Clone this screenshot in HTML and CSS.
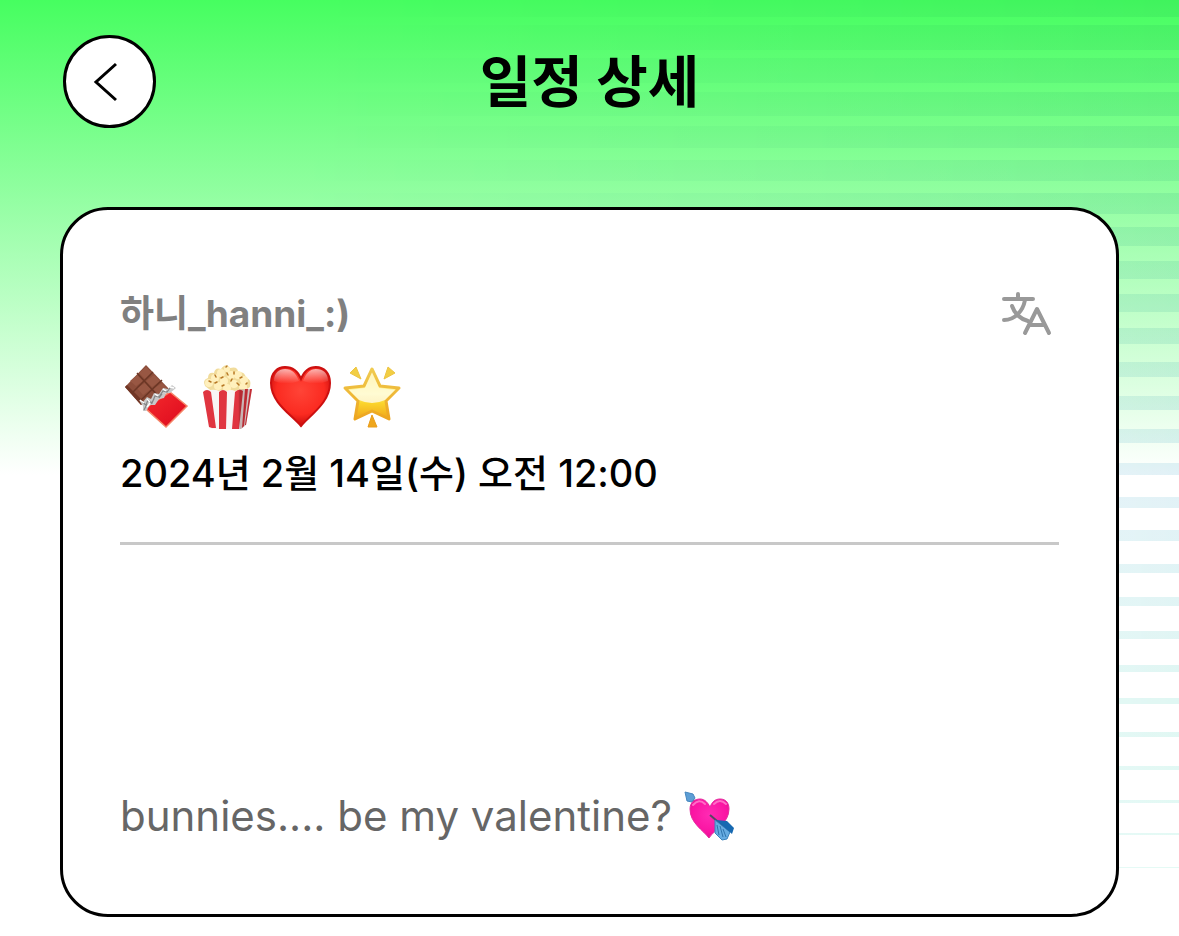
FILE: index.html
```html
<!DOCTYPE html>
<html lang="ko">
<head>
    <meta charset="UTF-8">
    <meta name="viewport" content="width=device-width, initial-scale=1.0">
    <title>일정 상세</title>
    <link rel="stylesheet" href="styles.css">
</head>
<body>
    <!-- 배경 줄무늬 -->
    <svg class="stripes" viewBox="0 0 1179 936" preserveAspectRatio="none" aria-hidden="true">
        <defs>
            <linearGradient id="fade-x">
                <stop offset="0.25" stop-color="#000"/>
                <stop offset="0.65" stop-color="#777"/>
                <stop offset="1" stop-color="#fff"/>
            </linearGradient>
            <linearGradient id="tint" x1="0" y1="0" x2="0" y2="1">
                <stop offset="0" stop-color="#e8f4f8"/>
                <stop offset="0.5" stop-color="#e2f1f7"/>
                <stop offset="0.75" stop-color="#e0f7f3"/>
                <stop offset="1" stop-color="#e6fbf6"/>
            </linearGradient>
            <mask id="bars" maskUnits="userSpaceOnUse" x="0" y="0" width="1179" height="936">
                <path fill="url(#fade-x)" d="M0 0H1179V17H0ZM0 25H1179V50H0ZM0 58H1179V83H0ZM0 92H1179V116H0ZM0 126H1179V148H0ZM0 160H1179V181H0ZM0 193H1179V214H0ZM0 227H1179V246H0ZM0 261H1179V279H0ZM0 294H1179V312H0ZM0 328H1179V344H0ZM0 362H1179V377H0ZM0 396H1179V410H0ZM0 429H1179V443H0ZM0 463H1179V475H0ZM0 497H1179V508H0ZM0 530H1179V541H0ZM0 564H1179V573H0ZM0 597H1179V606H0ZM0 631H1179V639H0ZM0 665H1179V672H0ZM0 698H1179V704H0ZM0 732H1179V737H0ZM0 766H1179V770H0ZM0 800H1179V803H0ZM0 833H1179V835H0ZM0 867H1179V868H0Z"/>
            </mask>
        </defs>
        <rect width="1179" height="936" fill="url(#tint)" mask="url(#bars)"/>
    </svg>

    <header class="header">
        <button class="back-btn" type="button" aria-label="뒤로">
            <svg class="back-icon" viewBox="0 0 48 48" aria-hidden="true">
                <path d="M30 6L10 24L30 42"/>
            </svg>
        </button>
        <h1 class="title">일정 상세</h1>
    </header>

    <main class="card">
        <div class="name-row">
            <h2 class="name">하니_hanni_:)</h2>
            <button class="translate-btn" type="button" aria-label="번역">
                <svg class="translate-icon" viewBox="0 0 54 48" aria-hidden="true">
                    <path d="M4 9H33M18 4V9M25 10C23 21 15 30 4 30M12 16C15 25 21 29 28 31"/>
                    <path d="M25 43L37 19L49 43M29 35H45"/>
                </svg>
            </button>
        </div>

        <div class="emojis">
            <!-- 초콜릿 -->
            <svg class="emoji" viewBox="0 0 72 72" role="img" aria-label="초콜릿">
                <defs>
                    <linearGradient id="wrap" x1="0" y1="0" x2="1" y2="1">
                        <stop offset="0" stop-color="#f52b2d"/>
                        <stop offset="0.7" stop-color="#e41322"/>
                        <stop offset="1" stop-color="#c90d19"/>
                    </linearGradient>
                </defs>
                <path fill="#8c4d3a" d="M26 4L50 29L21 44L5 26Z"/>
                <path fill="#713625" d="M5 26L21 44L23 40L7 24Z"/>
                <path fill="#985743" d="M26 6L32 12L25 18L19 12ZM34 14L40 20L32 26L26 20ZM17 14L23 20L16 25L10 20ZM25 22L31 28L23 34L17 27ZM42 22L47 27L38 33L33 28Z"/>
                <path stroke="#6b3625" stroke-width="1.5" fill="none" d="M17 12L39 36M33 11L12 32M42 19L20 40"/>
                <path fill="url(#wrap)" stroke="#f58467" stroke-width="1.5" d="M50 31L67 45L46 66L25 47Z"/>
                <path fill="#c9c9c9" d="M19 39L23 41L27 36L31 38L34 32L39 33L43 27L48 28L52 24L56 27L50 32L46 32L44 37L39 38L35 44L30 44L26 50L23 50L23 45Z"/>
                <path stroke="#858585" stroke-width="1.2" fill="none" d="M22 41L26 44L28 39L32 42L35 35L39 36L43 30L47 31L50 27M24 49L27 43M31 43L34 38M39 37L42 33"/>
                <path stroke="#fff" stroke-width="1.3" fill="none" d="M20 39L24 42M27 38L30 41M35 33L38 35M43 28L46 30M50 26L54 27M27 46L30 42"/>
            </svg>
            <!-- 팝콘 -->
            <svg class="emoji" viewBox="0 0 72 72" role="img" aria-label="팝콘">
                <defs>
                    <linearGradient id="box-side">
                        <stop offset="0" stop-color="#000" stop-opacity="0"/>
                        <stop offset="0.72" stop-color="#000" stop-opacity="0"/>
                        <stop offset="0.76" stop-color="#501010" stop-opacity="0.3"/>
                        <stop offset="1" stop-color="#501010" stop-opacity="0.2"/>
                    </linearGradient>
                </defs>
                <path fill="#f1dc9c" d="M13 25Q10 19 16 17Q16 11 22 12Q23 6 29 8Q34 1 38 7Q46 5 46 11Q53 10 54 17Q60 18 58 26L50 32H22Z"/>
                <g fill="#fff0bd">
                    <circle cx="17" cy="22" r="4"/><circle cx="23" cy="17" r="4"/><circle cx="29" cy="12" r="4"/>
                    <circle cx="35" cy="8" r="3"/><circle cx="39" cy="14" r="4"/><circle cx="46" cy="14" r="4"/>
                    <circle cx="52" cy="19" r="4"/><circle cx="32" cy="20" r="4"/><circle cx="42" cy="23" r="4"/>
                    <circle cx="26" cy="25" r="4"/><circle cx="51" cy="26" r="4"/><circle cx="35" cy="27" r="4"/>
                </g>
                <path stroke="#b87825" stroke-width="1.5" stroke-linecap="round" fill="none" d="M17 20L19 21M23 14L24 16M29 17L31 16M35 12L36 14M42 11L42 13M48 17L50 16M39 20L40 18M45 22L47 24M23 22L25 21M30 25L32 24M54 23L55 22M34 6L35 5"/>
                <path fill="#f8f5f5" d="M11 31L13 29Q15 28 18 29Q23 28 27 30Q31 28 35 30Q39 28 43 30Q47 28 51 29Q55 27 60 28L54 64L49 68H20L17 66Z"/>
                <path fill="#e03540" d="M11 31Q15 27 19 31L24 67H20L17 66ZM27 31Q31 27 35 31L34 68H27ZM43 31Q47 27 51 30L47 68H40ZM53 28L56 28L52 65L50 67ZM58 28L60 28L54 64L53 64Z"/>
                <path fill="url(#box-side)" d="M11 31L13 29L60 28L54 64L49 68H20L17 66Z"/>
            </svg>
            <!-- 하트 -->
            <svg class="emoji" viewBox="0 0 72 72" role="img" aria-label="빨간 하트">
                <defs>
                    <radialGradient id="heart-red" cx="0.5" cy="0.4" r="0.62">
                        <stop offset="0" stop-color="#ff4437"/>
                        <stop offset="0.65" stop-color="#fb2b21"/>
                        <stop offset="1" stop-color="#c40909"/>
                    </radialGradient>
                    <linearGradient id="gloss" x1="0" y1="0" x2="0" y2="1">
                        <stop offset="0" stop-color="#fff" stop-opacity="0.65"/>
                        <stop offset="1" stop-color="#fff" stop-opacity="0"/>
                    </linearGradient>
                </defs>
                <path fill="url(#heart-red)" stroke="#cc1010" stroke-width="2" d="M37 65C28 54 7 42 7 22C7 11 14 6 21 6C29 6 34 10 37 18C40 10 45 6 52 6C60 6 66 12 66 22C66 42 46 54 37 65Z"/>
                <path fill="url(#gloss)" d="M10 20C10 12 15 8 21 8C28 8 32 12 35 20Q22 25 10 20ZM39 20C42 12 46 8 52 8C59 8 64 12 64 20Q52 25 39 20Z"/>
            </svg>
            <!-- 별 -->
            <svg class="emoji" viewBox="0 0 72 72" role="img" aria-label="빛나는 별">
                <defs>
                    <linearGradient id="star-gold" x1="0" y1="0" x2="0" y2="1">
                        <stop offset="0" stop-color="#fff0a0"/>
                        <stop offset="0.5" stop-color="#fff58c"/>
                        <stop offset="0.68" stop-color="#fbd52c"/>
                        <stop offset="1" stop-color="#f0a51b"/>
                    </linearGradient>
                    <linearGradient id="star-edge" x1="0" y1="0" x2="0" y2="1">
                        <stop offset="0" stop-color="#f0cb50"/>
                        <stop offset="1" stop-color="#eda51f"/>
                    </linearGradient>
                    <linearGradient id="star-gloss" x1="0" y1="0" x2="0" y2="1">
                        <stop offset="0" stop-color="#fff" stop-opacity="0.3"/>
                        <stop offset="1" stop-color="#fff" stop-opacity="0.75"/>
                    </linearGradient>
                </defs>
                <path fill="url(#star-gold)" stroke="url(#star-edge)" stroke-width="3" stroke-linejoin="round" d="M36 8L44 25L63 27L50 40L53 58L36 50L19 58L22 40L9 27L28 25Z"/>
                <path fill="url(#star-gloss)" d="M36 11L43 27L59 29L49 39Q36 45 23 39L13 29L29 27Z"/>
                <path fill="#f2ce43" stroke="#edc443" stroke-linejoin="round" d="M20 6L25 18L14 12ZM52 6L48 18L59 12Z"/>
                <path fill="#efa71d" stroke="#e99d1c" stroke-linejoin="round" d="M36 54L41 66H32Z"/>
            </svg>
        </div>

        <time class="date" datetime="2024-02-14T00:00">2024년 2월 14일(수) 오전 12:00</time>

        <hr class="divider">

        <p class="message">
            <span>bunnies.... be my valentine?</span>
            <svg class="cupid" viewBox="0 0 54 54" role="img" aria-label="화살 맞은 하트">
                <defs>
                    <radialGradient id="heart-pink" cx="0.5" cy="0.4" r="0.65">
                        <stop offset="0" stop-color="#ff2bb4"/>
                        <stop offset="0.7" stop-color="#fa14a2"/>
                        <stop offset="1" stop-color="#d8108b"/>
                    </radialGradient>
                </defs>
                <path stroke="#6c7684" stroke-width="2" d="M8 9L14 15"/>
                <path fill="#5d9ed5" stroke="#4586bf" d="M2 3L10 5L12 9L9 13L4 12Z"/>
                <path fill="url(#heart-pink)" stroke="#e52b9f" d="M26 49C20 41 7 34 7 20C7 13 12 10 17 10C22 10 25 14 27 18C29 13 32 10 37 10C43 10 46 14 46 20C46 34 32 40 26 49Z"/>
                <path fill="none" stroke="#ff6cc6" stroke-width="2" stroke-linecap="round" d="M10 16Q16 9 22 15M31 15Q37 9 43 15"/>
                <path stroke="#554762" stroke-width="2" d="M27 26L47 43"/>
                <path fill="#66ace2" stroke="#3c84bd" d="M32 31L47 43L44 50L39 51L32 44Z"/>
                <path fill="#1769b1" d="M33 31L44 32L51 39L49 45Z"/>
                <path stroke="#2f74ae" fill="none" d="M34 36L36 46M37 37L40 48M40 40L43 48"/>
            </svg>
        </p>
    </main>
</body>
</html>
```
FILE: styles.css
```css
* {
    margin: 0;
    padding: 0;
    box-sizing: border-box;
}

body {
    position: relative;
    min-height: 100vh;
    padding-bottom: 20px;
    font-family: Inter, "Noto Sans CJK KR", sans-serif;
    color: #000;
    background: #fff linear-gradient(#46fe60 0, #fff 475px) no-repeat;
}

.stripes {
    position: absolute;
    top: 0;
    left: 0;
    width: 100%;
    height: 936px;
    mix-blend-mode: multiply;
}

.header {
    position: relative;
    display: grid;
    grid-template-columns: 93px 1fr 93px;
    align-items: center;
    padding: 35px 63px 79px;
}

.back-btn {
    display: flex;
    align-items: center;
    justify-content: center;
    width: 93px;
    height: 93px;
    border: 3px solid #000;
    border-radius: 50%;
    background: #fff;
    cursor: pointer;
}

.back-icon {
    width: 48px;
    height: 48px;
    fill: none;
    stroke: #000;
    stroke-width: 3;
}

.title {
    font-size: 56px;
    line-height: 80px;
    font-weight: 700;
    text-align: center;
}

.card {
    position: relative;
    margin: 0 60px;
    padding: 80px 57px 68px;
    border: 3px solid #000;
    border-radius: 48px;
    background: #fff;
}

.name-row {
    display: flex;
    align-items: center;
    justify-content: space-between;
    margin-bottom: 23px;
}

.name {
    font-size: 37px;
    line-height: 48px;
    font-weight: 700;
    color: #808080;
}

.translate-btn {
    display: flex;
    margin-right: 5px;
    border: none;
    background: none;
    cursor: pointer;
}

.translate-icon {
    width: 54px;
    height: 48px;
    fill: none;
    stroke: #999;
    stroke-width: 4;
    stroke-linecap: round;
    stroke-linejoin: round;
}

.emojis {
    display: flex;
    margin-bottom: 16px;
}

.emoji {
    width: 72px;
    height: 72px;
}

.date {
    display: block;
    font-size: 38px;
    line-height: 48px;
    font-weight: 500;
}

.divider {
    margin: 45px 0 241px;
    border: none;
    border-top: 3px solid #c8c8c8;
}

.message {
    display: flex;
    align-items: center;
    gap: 11px;
    font-size: 42px;
    line-height: 60px;
    color: #666;
}

.cupid {
    width: 54px;
    height: 54px;
}
```
